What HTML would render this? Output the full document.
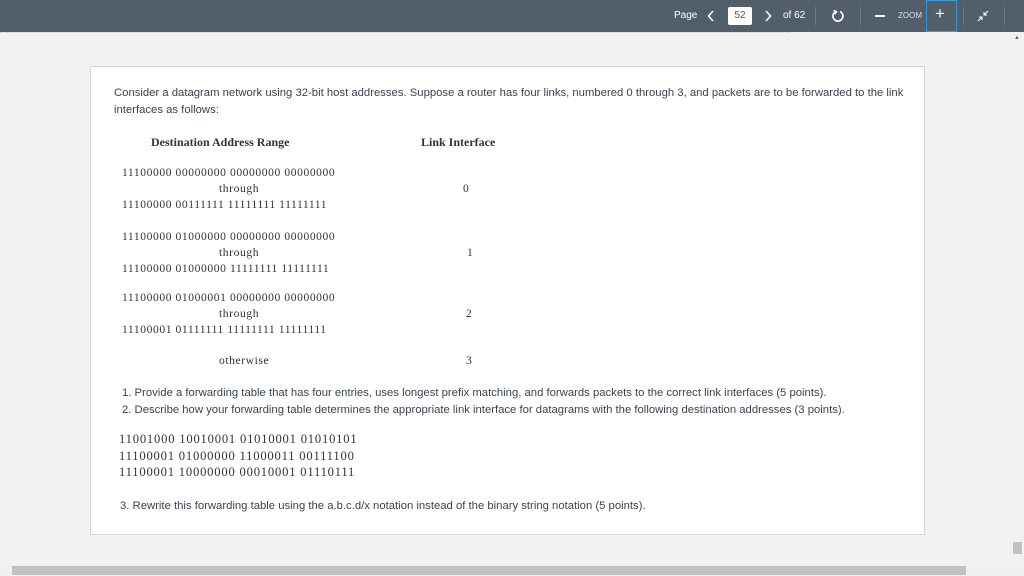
<!DOCTYPE html>
<html><head><style>
body{margin:0;width:1024px;height:576px;background:#f2f2f2;position:relative;overflow:hidden;font-family:"Liberation Sans",sans-serif}
.tb{position:absolute;left:0;top:0;width:1024px;height:32px;background:#525f6b;color:#fff;font-size:10px}
.tb span{position:absolute}
.pg{position:absolute;left:90px;top:66px;width:833px;height:467px;background:#fff;border:1px solid #d4d4dc}
.a{position:absolute;white-space:nowrap}
.s{font-family:"Liberation Sans",sans-serif;font-size:11.3px;color:#3a4250}
.r{font-family:"Liberation Serif",serif;font-size:11.6px;color:#333;letter-spacing:0.57px}
.b{font-weight:bold;font-size:12px;letter-spacing:0}
</style></head><body>
<div class="tb">
<span style="left:674px;top:10px">Page</span>
<svg style="position:absolute;left:707px;top:10px" width="8" height="12" viewBox="0 0 8 12"><path d="M6 1 L1.5 6 L6 11" fill="none" stroke="#fff" stroke-width="1.5"/></svg>
<span style="left:728px;top:7px;width:24px;height:18px;background:#fff;border-radius:2px;color:#555;text-align:center;line-height:18px">52</span>
<svg style="position:absolute;left:764px;top:10px" width="8" height="12" viewBox="0 0 8 12"><path d="M2 1 L6.5 6 L2 11" fill="none" stroke="#fff" stroke-width="1.5"/></svg>
<span style="left:783px;top:10px">of 62</span>
<span style="left:815px;top:7px;width:1px;height:18px;background:#6e7a85"></span>
<svg style="position:absolute;left:831px;top:9px" width="14" height="14" viewBox="0 0 14 14"><path d="M4 3 A5 5 0 1 0 9 2.5" fill="none" stroke="#fff" stroke-width="1.6"/><path d="M2.5 1.5 L5.5 2.5 L3.8 5.5" fill="none" stroke="#fff" stroke-width="1.4"/></svg>
<span style="left:860px;top:7px;width:1px;height:18px;background:#6e7a85"></span>
<span style="left:875px;top:15px;width:10px;height:1.5px;background:#fff"></span>
<span style="left:898px;top:11px;font-size:8px;color:#dde">ZOOM</span>
<span style="left:926px;top:0;width:29px;height:30px;border:1px solid #3a9ad9"></span>
<span style="left:935px;top:4px;font-size:17px">+</span>
<span style="left:963px;top:7px;width:1px;height:18px;background:#6e7a85"></span>
<svg style="position:absolute;left:977px;top:10px" width="12" height="12" viewBox="0 0 12 12"><path d="M7 5 L11 1 M7 2 V5 H10 M5 7 L1 11 M2 7 H5 V10" fill="none" stroke="#fff" stroke-width="1.1"/></svg>
<span style="left:1004px;top:7px;width:1px;height:18px;background:#6e7a85"></span>
</div>
<div style="position:absolute;left:0;top:32px;width:790px;border-top:1px dotted #ccc"></div>
<div class="pg">
<div class="a s" style="left:23px;top:18px;line-height:17px">Consider a datagram network using 32-bit host addresses. Suppose a router has four links, numbered 0 through 3, and packets are to be forwarded to the link<br>interfaces as follows:</div>
<div class="a r b" style="left:60px;top:68px">Destination Address Range</div>
<div class="a r b" style="left:330px;top:68px">Link Interface</div>

<div class="a r" style="left:31px;top:98px;line-height:16px">11100000 00000000 00000000 00000000<br><span style="padding-left:97px">through</span><br>11100000 00111111 11111111 11111111</div>
<div class="a r" style="left:372px;top:115px">0</div>

<div class="a r" style="left:31px;top:162px;line-height:16px">11100000 01000000 00000000 00000000<br><span style="padding-left:97px">through</span><br>11100000 01000000 11111111 11111111</div>
<div class="a r" style="left:376px;top:179px">1</div>

<div class="a r" style="left:31px;top:223px;line-height:16px">11100000 01000001 00000000 00000000<br><span style="padding-left:97px">through</span><br>11100001 01111111 11111111 11111111</div>
<div class="a r" style="left:375px;top:240px">2</div>

<div class="a r" style="left:128px;top:287px">otherwise</div>
<div class="a r" style="left:375px;top:287px">3</div>

<div class="a s" style="left:31px;top:318px;line-height:17px">1. Provide a forwarding table that has four entries, uses longest prefix matching, and forwards packets to the correct link interfaces (5 points).<br>2. Describe how your forwarding table determines the appropriate link interface for datagrams with the following destination addresses (3 points).</div>
<div class="a r" style="left:28px;top:364px;font-size:12.6px;line-height:16.5px;letter-spacing:0.8px">11001000 10010001 01010001 01010101<br>11100001 01000000 11000011 00111100<br>11100001 10000000 00010001 01110111</div>
<div class="a s" style="left:29px;top:433px">3. Rewrite this forwarding table using the a.b.c.d/x notation instead of the binary string notation (5 points).</div>
</div>
<div style="position:absolute;left:1013px;top:542px;width:9px;height:12px;background:#c1c1c1"></div>
<div style="position:absolute;left:1014px;top:35px;font-size:6px;color:#666">&#9650;</div>
<div style="position:absolute;left:0;top:565px;width:1024px;height:11px;background:#f0f0f0"></div>
<div style="position:absolute;left:12px;top:566px;width:954px;height:9px;background:#c1c1c1"></div>
</body></html>
